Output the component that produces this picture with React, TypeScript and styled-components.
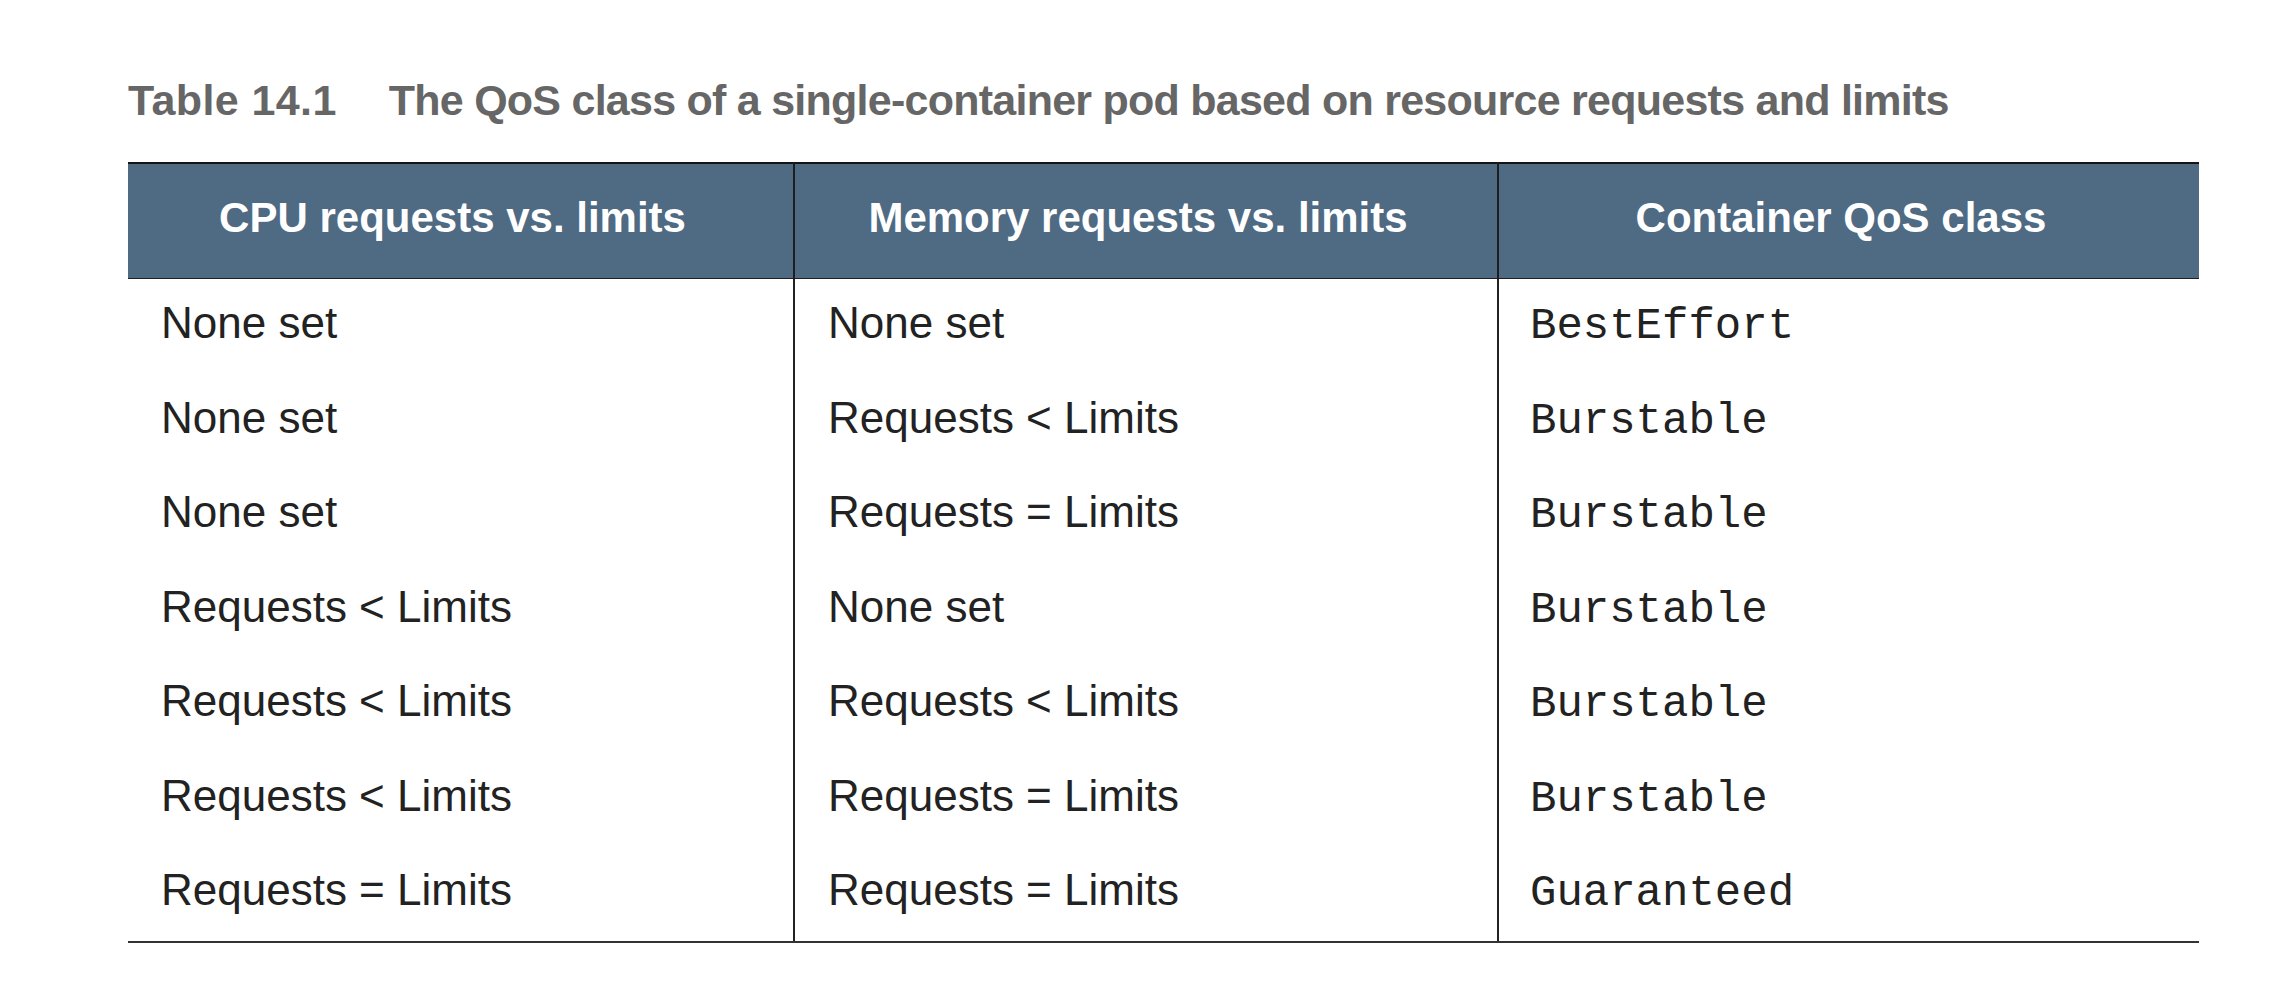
import React from "react";
import styled, { createGlobalStyle } from "styled-components";

const Global = createGlobalStyle`
  html, body { margin: 0; padding: 0; background: #ffffff; }
  body { font-family: "Liberation Sans", Arial, sans-serif; }
`;

const Page = styled.div`
  padding: 75px 0 0 128px;
  width: 2071px;
`;

const Caption = styled.div`
  font-family: "Liberation Sans", Arial, sans-serif;
  font-weight: 700;
  font-size: 43px;
  line-height: 50px;
  color: #666666;
  display: flex;
  gap: 52px;
  white-space: nowrap;
`;

const CaptionLabel = styled.span`
  letter-spacing: 0.4px;
`;

const CaptionText = styled.span`
  letter-spacing: -0.75px;
`;

const Table = styled.div`
  margin-top: 37px;
  display: grid;
  grid-template-columns: 665px 704px 702px;
  border-bottom: 2px solid #333333;
`;

const HeadCell = styled.div<{ $first?: boolean }>`
  background: #4f6a83;
  border-top: 2px solid #151515;
  border-bottom: 1px solid #1e1e1e;
  border-left: ${(p) => (p.$first ? "none" : "2px solid #1e1e1e")};
  display: flex;
  align-items: center;
  justify-content: center;
  padding: 0 16px 6px 0;
  box-sizing: border-box;
  height: 117px;
  color: #ffffff;
  font-family: "Liberation Sans", Arial, sans-serif;
  font-weight: 700;
  font-size: 42px;
  white-space: nowrap;
`;

const Cell = styled.div<{ $first?: boolean; $mono?: boolean }>`
  height: 94.5px;
  box-sizing: border-box;
  display: flex;
  align-items: center;
  padding: 0 0 ${(p) => (p.$mono ? "0" : "6px")} ${(p) => (p.$mono ? "31px" : "33px")};
  border-left: ${(p) => (p.$first ? "none" : "2px solid #222222")};
  color: #222222;
  font-family: ${(p) =>
    p.$mono ? `"Liberation Mono", "Courier New", monospace` : `"Liberation Sans", Arial, sans-serif`};
  font-size: 44px;
  white-space: nowrap;
`;

const headers = ["CPU requests vs. limits", "Memory requests vs. limits", "Container QoS class"];

const rows: [string, string, string][] = [
  ["None set", "None set", "BestEffort"],
  ["None set", "Requests < Limits", "Burstable"],
  ["None set", "Requests = Limits", "Burstable"],
  ["Requests < Limits", "None set", "Burstable"],
  ["Requests < Limits", "Requests < Limits", "Burstable"],
  ["Requests < Limits", "Requests = Limits", "Burstable"],
  ["Requests = Limits", "Requests = Limits", "Guaranteed"],
];

export default function App() {
  return (
    <>
      <Global />
      <Page>
        <Caption>
          <CaptionLabel>Table 14.1</CaptionLabel>
          <CaptionText>The QoS class of a single-container pod based on resource requests and limits</CaptionText>
        </Caption>
        <Table>
          {headers.map((h, i) => (
            <HeadCell key={h} $first={i === 0}>
              {h}
            </HeadCell>
          ))}
          {rows.map((r, ri) => (
            <React.Fragment key={ri}>
              <Cell $first>{r[0]}</Cell>
              <Cell>{r[1]}</Cell>
              <Cell $mono>{r[2]}</Cell>
            </React.Fragment>
          ))}
        </Table>
      </Page>
    </>
  );
}
